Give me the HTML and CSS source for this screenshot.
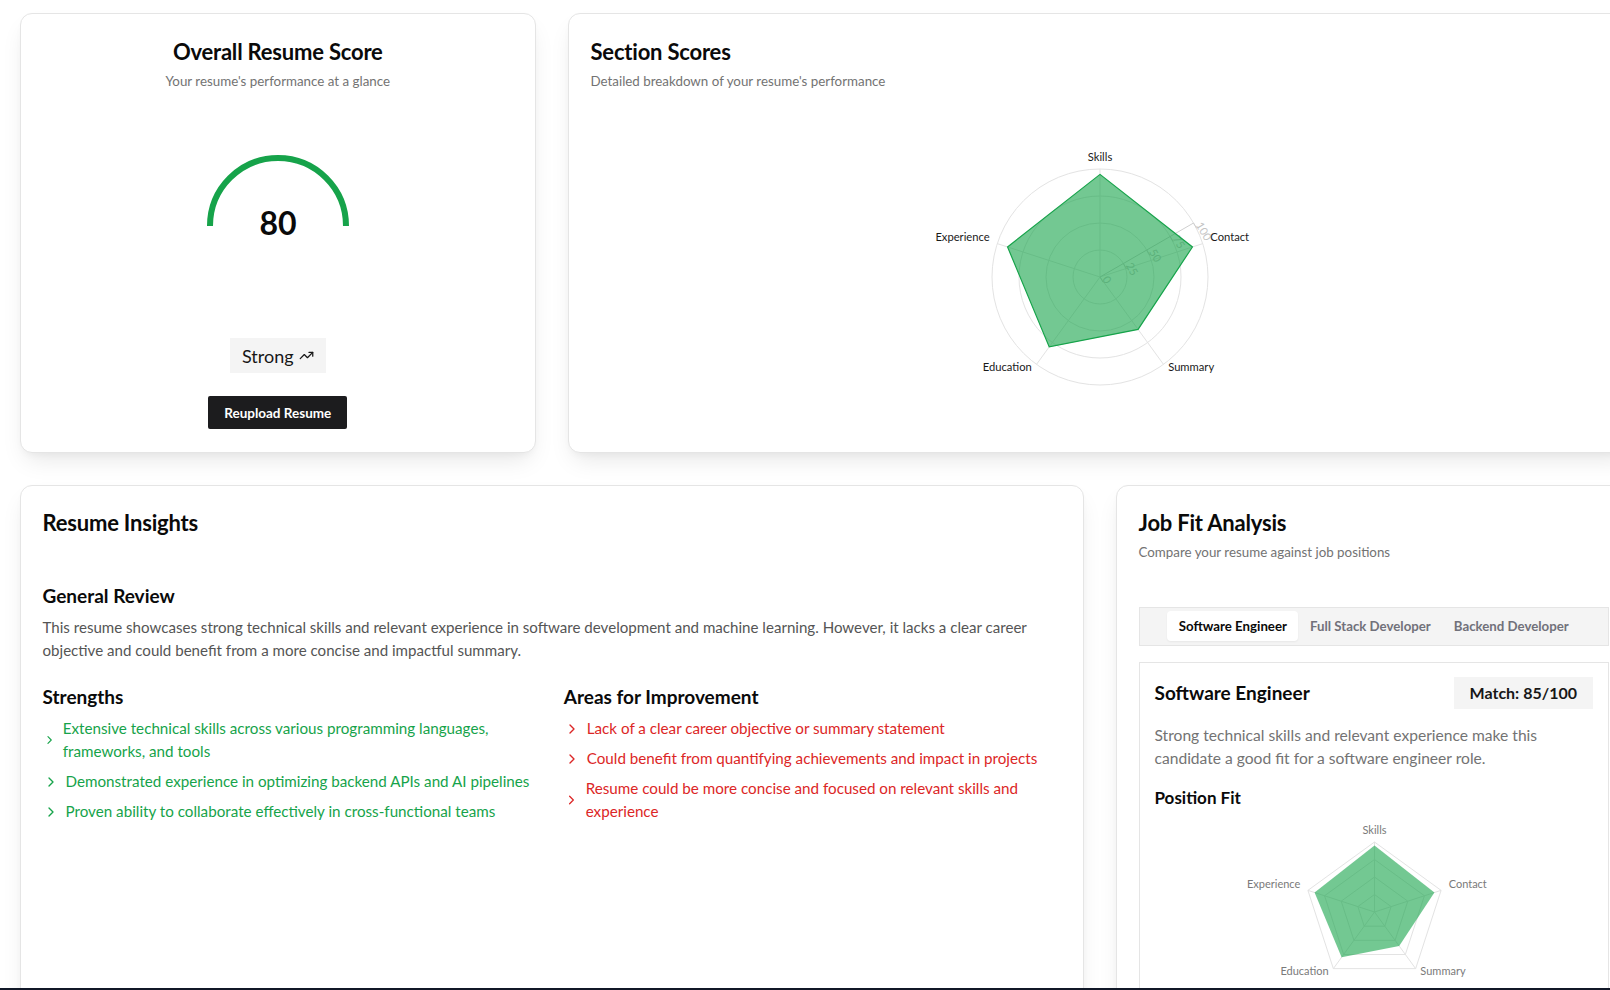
FILE: index.html
```html
<!DOCTYPE html>
<html lang="en">
<head>
<meta charset="utf-8">
<title>Resume Analysis</title>
<link rel="stylesheet" href="styles.css">
</head>
<body>
<main class="dashboard">
  <section class="card score-card">
    <h2 class="card-title">Overall Resume Score</h2>
    <p class="card-sub">Your resume's performance at a glance</p>
    <svg class="gauge" width="160" height="100" viewBox="0 0 160 100">
      <path d="M12 80 A68 68 0 0 1 148 80" fill="none" stroke="#16a34a" stroke-width="6"/>
      <text x="80" y="89" text-anchor="middle" class="gauge-num">80</text>
    </svg>
    <div class="rating">Strong
      <svg class="rating-icon" width="15" height="15" viewBox="0 0 24 24" fill="none" stroke="currentColor" stroke-width="2" stroke-linecap="round" stroke-linejoin="round"><polyline points="22 7 13.5 15.5 8.5 10.5 2 17"/><polyline points="16 7 22 7 22 13"/></svg>
    </div>
    <button class="btn-dark">Reupload Resume</button>
  </section>

  <section class="card span-2 sections-card">
    <h2 class="card-title">Section Scores</h2>
    <p class="card-sub">Detailed breakdown of your resume's performance</p>
    <svg class="radar-big" width="600" height="300" viewBox="0 0 600 300">
      <g class="grid-line">
        <circle cx="300" cy="150" r="27"/>
        <circle cx="300" cy="150" r="54"/>
        <circle cx="300" cy="150" r="81"/>
        <circle cx="300" cy="150" r="108"/>
        <line x1="300" y1="150" x2="300" y2="42"/>
        <line x1="300" y1="150" x2="402.71" y2="116.63"/>
        <line x1="300" y1="150" x2="363.48" y2="237.37"/>
        <line x1="300" y1="150" x2="236.52" y2="237.37"/>
        <line x1="300" y1="150" x2="197.29" y2="116.63"/>
      </g>
      <g class="radius-axis">
        <line x1="300" y1="150" x2="393.53" y2="96"/>
        <line x1="300" y1="150" x2="303" y2="155.2"/>
        <line x1="323.38" y1="136.5" x2="326.38" y2="141.7"/>
        <line x1="346.77" y1="123" x2="349.77" y2="128.2"/>
        <line x1="370.15" y1="109.5" x2="373.15" y2="114.7"/>
        <line x1="393.53" y1="96" x2="396.53" y2="101.2"/>
        <text x="302" y="152" transform="rotate(60 302 152)">0</text>
        <text x="325.4" y="138.5" transform="rotate(60 325.4 138.5)">25</text>
        <text x="348.8" y="125" transform="rotate(60 348.8 125)">50</text>
        <text x="372.2" y="111.5" transform="rotate(60 372.2 111.5)">75</text>
        <text x="395.5" y="98" transform="rotate(60 395.5 98)">100</text>
      </g>
      <polygon class="radar-area" points="300,47.4 392.44,119.96 338.09,202.42 249.22,219.9 207.56,119.96"/>
      <g class="axis-label dark">
        <text x="300" y="34" text-anchor="middle">Skills</text>
        <text x="410.32" y="114.15" text-anchor="start">Contact</text>
        <text x="368.18" y="243.85" text-anchor="start">Summary</text>
        <text x="231.82" y="243.85" text-anchor="end">Education</text>
        <text x="189.68" y="114.15" text-anchor="end">Experience</text>
      </g>
    </svg>
  </section>

  <section class="card span-2 insights-card">
    <h2 class="card-title">Resume Insights</h2>
    <h3 class="sub-heading review-heading">General Review</h3>
    <p class="review-text">This resume showcases strong technical skills and relevant experience in software development and machine learning. However, it lacks a clear career objective and could benefit from a more concise and impactful summary.</p>
    <div class="insight-cols">
      <div class="insight-col">
        <h3 class="sub-heading">Strengths</h3>
        <ul class="point-list good">
          <li><svg class="chev" width="16" height="16" viewBox="0 0 24 24" fill="none" stroke="currentColor" stroke-width="2" stroke-linecap="round" stroke-linejoin="round"><path d="m9 18 6-6-6-6"/></svg><span>Extensive technical skills across various programming languages, frameworks, and tools</span></li>
          <li><svg class="chev" width="16" height="16" viewBox="0 0 24 24" fill="none" stroke="currentColor" stroke-width="2" stroke-linecap="round" stroke-linejoin="round"><path d="m9 18 6-6-6-6"/></svg><span>Demonstrated experience in optimizing backend APIs and AI pipelines</span></li>
          <li><svg class="chev" width="16" height="16" viewBox="0 0 24 24" fill="none" stroke="currentColor" stroke-width="2" stroke-linecap="round" stroke-linejoin="round"><path d="m9 18 6-6-6-6"/></svg><span>Proven ability to collaborate effectively in cross-functional teams</span></li>
        </ul>
      </div>
      <div class="insight-col">
        <h3 class="sub-heading">Areas for Improvement</h3>
        <ul class="point-list bad">
          <li><svg class="chev" width="16" height="16" viewBox="0 0 24 24" fill="none" stroke="currentColor" stroke-width="2" stroke-linecap="round" stroke-linejoin="round"><path d="m9 18 6-6-6-6"/></svg><span>Lack of a clear career objective or summary statement</span></li>
          <li><svg class="chev" width="16" height="16" viewBox="0 0 24 24" fill="none" stroke="currentColor" stroke-width="2" stroke-linecap="round" stroke-linejoin="round"><path d="m9 18 6-6-6-6"/></svg><span>Could benefit from quantifying achievements and impact in projects</span></li>
          <li><svg class="chev" width="16" height="16" viewBox="0 0 24 24" fill="none" stroke="currentColor" stroke-width="2" stroke-linecap="round" stroke-linejoin="round"><path d="m9 18 6-6-6-6"/></svg><span>Resume could be more concise and focused on relevant skills and experience</span></li>
        </ul>
      </div>
    </div>
  </section>

  <section class="card jobfit-card">
    <h2 class="card-title">Job Fit Analysis</h2>
    <p class="card-sub">Compare your resume against job positions</p>
    <div class="tabs">
      <button class="tab active">Software Engineer</button>
      <button class="tab">Full Stack Developer</button>
      <button class="tab">Backend Developer</button>
    </div>
    <div class="job-panel">
      <div class="job-head">
        <h3 class="job-title">Software Engineer</h3>
        <span class="match">Match: 85/100</span>
      </div>
      <p class="job-desc">Strong technical skills and relevant experience make this candidate a good fit for a software engineer role.</p>
      <h4 class="fit-heading">Position Fit</h4>
      <svg class="radar-small" width="439" height="200" viewBox="0 0 439 200">
        <g class="grid-line">
          <polygon points="219.5,30 286.07,78.37 260.65,156.63 178.35,156.63 152.93,78.37"/>
          <polygon points="219.5,47.5 269.43,83.78 250.36,142.47 188.64,142.47 169.57,83.78"/>
          <polygon points="219.5,65 252.79,89.18 240.07,128.32 198.93,128.32 186.21,89.18"/>
          <polygon points="219.5,82.5 236.14,94.59 229.79,114.16 209.21,114.16 202.86,94.59"/>
          <line x1="219.5" y1="100" x2="219.5" y2="30"/>
          <line x1="219.5" y1="100" x2="286.07" y2="78.37"/>
          <line x1="219.5" y1="100" x2="260.65" y2="156.63"/>
          <line x1="219.5" y1="100" x2="178.35" y2="156.63"/>
          <line x1="219.5" y1="100" x2="152.93" y2="78.37"/>
        </g>
        <polygon class="radar-area soft" points="219.5,33.5 279.42,80.53 244.19,133.98 186.58,145.31 159.58,80.53"/>
        <g class="axis-label muted">
          <text x="219.5" y="22" text-anchor="middle">Skills</text>
          <text x="293.68" y="75.9" text-anchor="start">Contact</text>
          <text x="265.35" y="163.1" text-anchor="start">Summary</text>
          <text x="173.65" y="163.1" text-anchor="end">Education</text>
          <text x="145.32" y="75.9" text-anchor="end">Experience</text>
        </g>
      </svg>
    </div>
  </section>
</main>
<div class="bottom-bar"></div>
</body>
</html>
```

FILE: styles.css
```css
* { box-sizing: border-box; }

html, body {
  margin: 0;
  padding: 0;
  overflow: hidden;
  background: #ffffff;
}

body {
  font-family: Lato, "Open Sans", "DejaVu Sans", sans-serif;
  color: #0a0a0a;
  width: 1610px;
  height: 990px;
}

.dashboard {
  display: grid;
  grid-template-columns: repeat(3, 516.5px);
  gap: 31.5px;
  padding: 13px 0 0 19.5px;
  width: max-content;
}

.card {
  background: #ffffff;
  border: 1px solid #e5e5e5;
  border-radius: 12px;
  box-shadow: 0 12px 24px -6px rgba(0, 0, 0, 0.10), 0 4px 10px -4px rgba(0, 0, 0, 0.06);
  padding: 23px 22px 23px;
}

.span-2 { grid-column: span 2; }

.card-title {
  margin: 0;
  font-size: 22px;
  line-height: 30px;
  font-weight: 700;
  letter-spacing: -0.2px;
}

.card-sub {
  margin: 4px 0 0;
  font-size: 13.35px;
  line-height: 20px;
  color: #737373;
}

/* score card */
.score-card {
  display: flex;
  flex-direction: column;
  align-items: center;
  text-align: center;
}

.gauge { margin-top: 55px; display: block; }

.gauge-num {
  font-family: Lato, "Open Sans", sans-serif;
  font-size: 32px;
  font-weight: 700;
  fill: #0a0a0a;
}

.rating {
  margin-top: 92px;
  height: 35px;
  padding: 0 12px;
  background: #f4f4f4;
  display: flex;
  align-items: center;
  gap: 5px;
  font-size: 18px;
  color: #171717;
}

.rating-icon { display: block; }

.btn-dark {
  margin-top: 23px;
  height: 33px;
  padding: 0 16px;
  border: none;
  border-radius: 2px;
  background: #1c1c1e;
  color: #ffffff;
  font-family: inherit;
  font-size: 13.5px;
  font-weight: 700;
}

/* section scores */
.sections-card {
  display: flex;
  flex-direction: column;
}

.radar-big {
  display: block;
  margin: 36px auto 0;
}

.grid-line circle,
.grid-line polygon,
.grid-line line {
  fill: none;
  stroke: #e3e3e3;
  stroke-width: 1;
}

.radius-axis line { stroke: #cfcfcf; stroke-width: 1; }
.radius-axis text {
  font-family: Lato, "Open Sans", sans-serif;
  font-size: 11px;
  fill: #c4c4c4;
}

.radar-area {
  fill: #16a34a;
  fill-opacity: 0.6;
  stroke: #16a34a;
  stroke-width: 1.2;
}

.radar-area.soft { stroke: none; }

.axis-label text {
  font-family: Lato, "Open Sans", sans-serif;
  font-size: 11.2px;
}
.axis-label.dark text { fill: #1a1a1a; }
.axis-label.muted text { fill: #7a7a7a; font-size: 11px; }

/* insights */
.insights-card,
.jobfit-card { padding-top: 22px; }

.sub-heading {
  margin: 0;
  font-size: 19px;
  line-height: 26px;
  font-weight: 700;
}

.review-heading { margin-top: 45px; }

.review-text {
  margin: 7.5px 0 0;
  font-size: 15.1px;
  line-height: 23px;
  color: #555555;
}

.insight-cols {
  display: grid;
  grid-template-columns: 1fr 1fr;
  column-gap: 24px;
  margin-top: 21.5px;
}

.point-list {
  list-style: none;
  margin: 7.5px 0 0;
  padding: 0;
  display: flex;
  flex-direction: column;
  gap: 7px;
}

.point-list li {
  display: flex;
  align-items: center;
  gap: 7px;
  font-size: 15.2px;
  line-height: 23px;
}

.point-list.good li { color: #16a34a; }
.point-list.bad li { color: #dc2626; }

.chev { display: block; }

/* job fit */
.tabs {
  margin-top: 45px;
  display: flex;
  justify-content: center;
  padding: 3.5px;
  background: #f4f4f4;
  border: 1px solid #e5e5e5;
}

.tab {
  height: 30px;
  padding: 0 11.5px;
  border: none;
  background: transparent;
  font-family: inherit;
  font-size: 13.25px;
  font-weight: 700;
  color: #71717a;
  border-radius: 4px;
}

.tab.active {
  background: #ffffff;
  color: #0a0a0a;
  box-shadow: 0 1px 2px rgba(0, 0, 0, 0.05);
}

.job-panel {
  margin-top: 16px;
  border: 1px solid #e5e5e5;
  padding: 14px 15px;
}

.job-head {
  display: flex;
  justify-content: space-between;
  align-items: center;
}

.job-title {
  margin: 0;
  font-size: 19px;
  line-height: 26px;
  font-weight: 700;
}

.match {
  height: 32px;
  padding: 0 16px;
  display: flex;
  align-items: center;
  background: #f4f4f4;
  font-size: 16px;
  font-weight: 700;
  color: #171717;
}

.job-desc {
  margin: 15.5px 0 0;
  font-size: 15.6px;
  line-height: 23px;
  color: #737373;
}

.fit-heading {
  margin: 14.5px 0 0;
  font-size: 17px;
  line-height: 26px;
  font-weight: 700;
}

.radar-small {
  display: block;
  margin-top: 1px;
}

.bottom-bar {
  position: fixed;
  left: 0;
  right: 0;
  bottom: 0;
  height: 2px;
  background: #111827;
}
```
